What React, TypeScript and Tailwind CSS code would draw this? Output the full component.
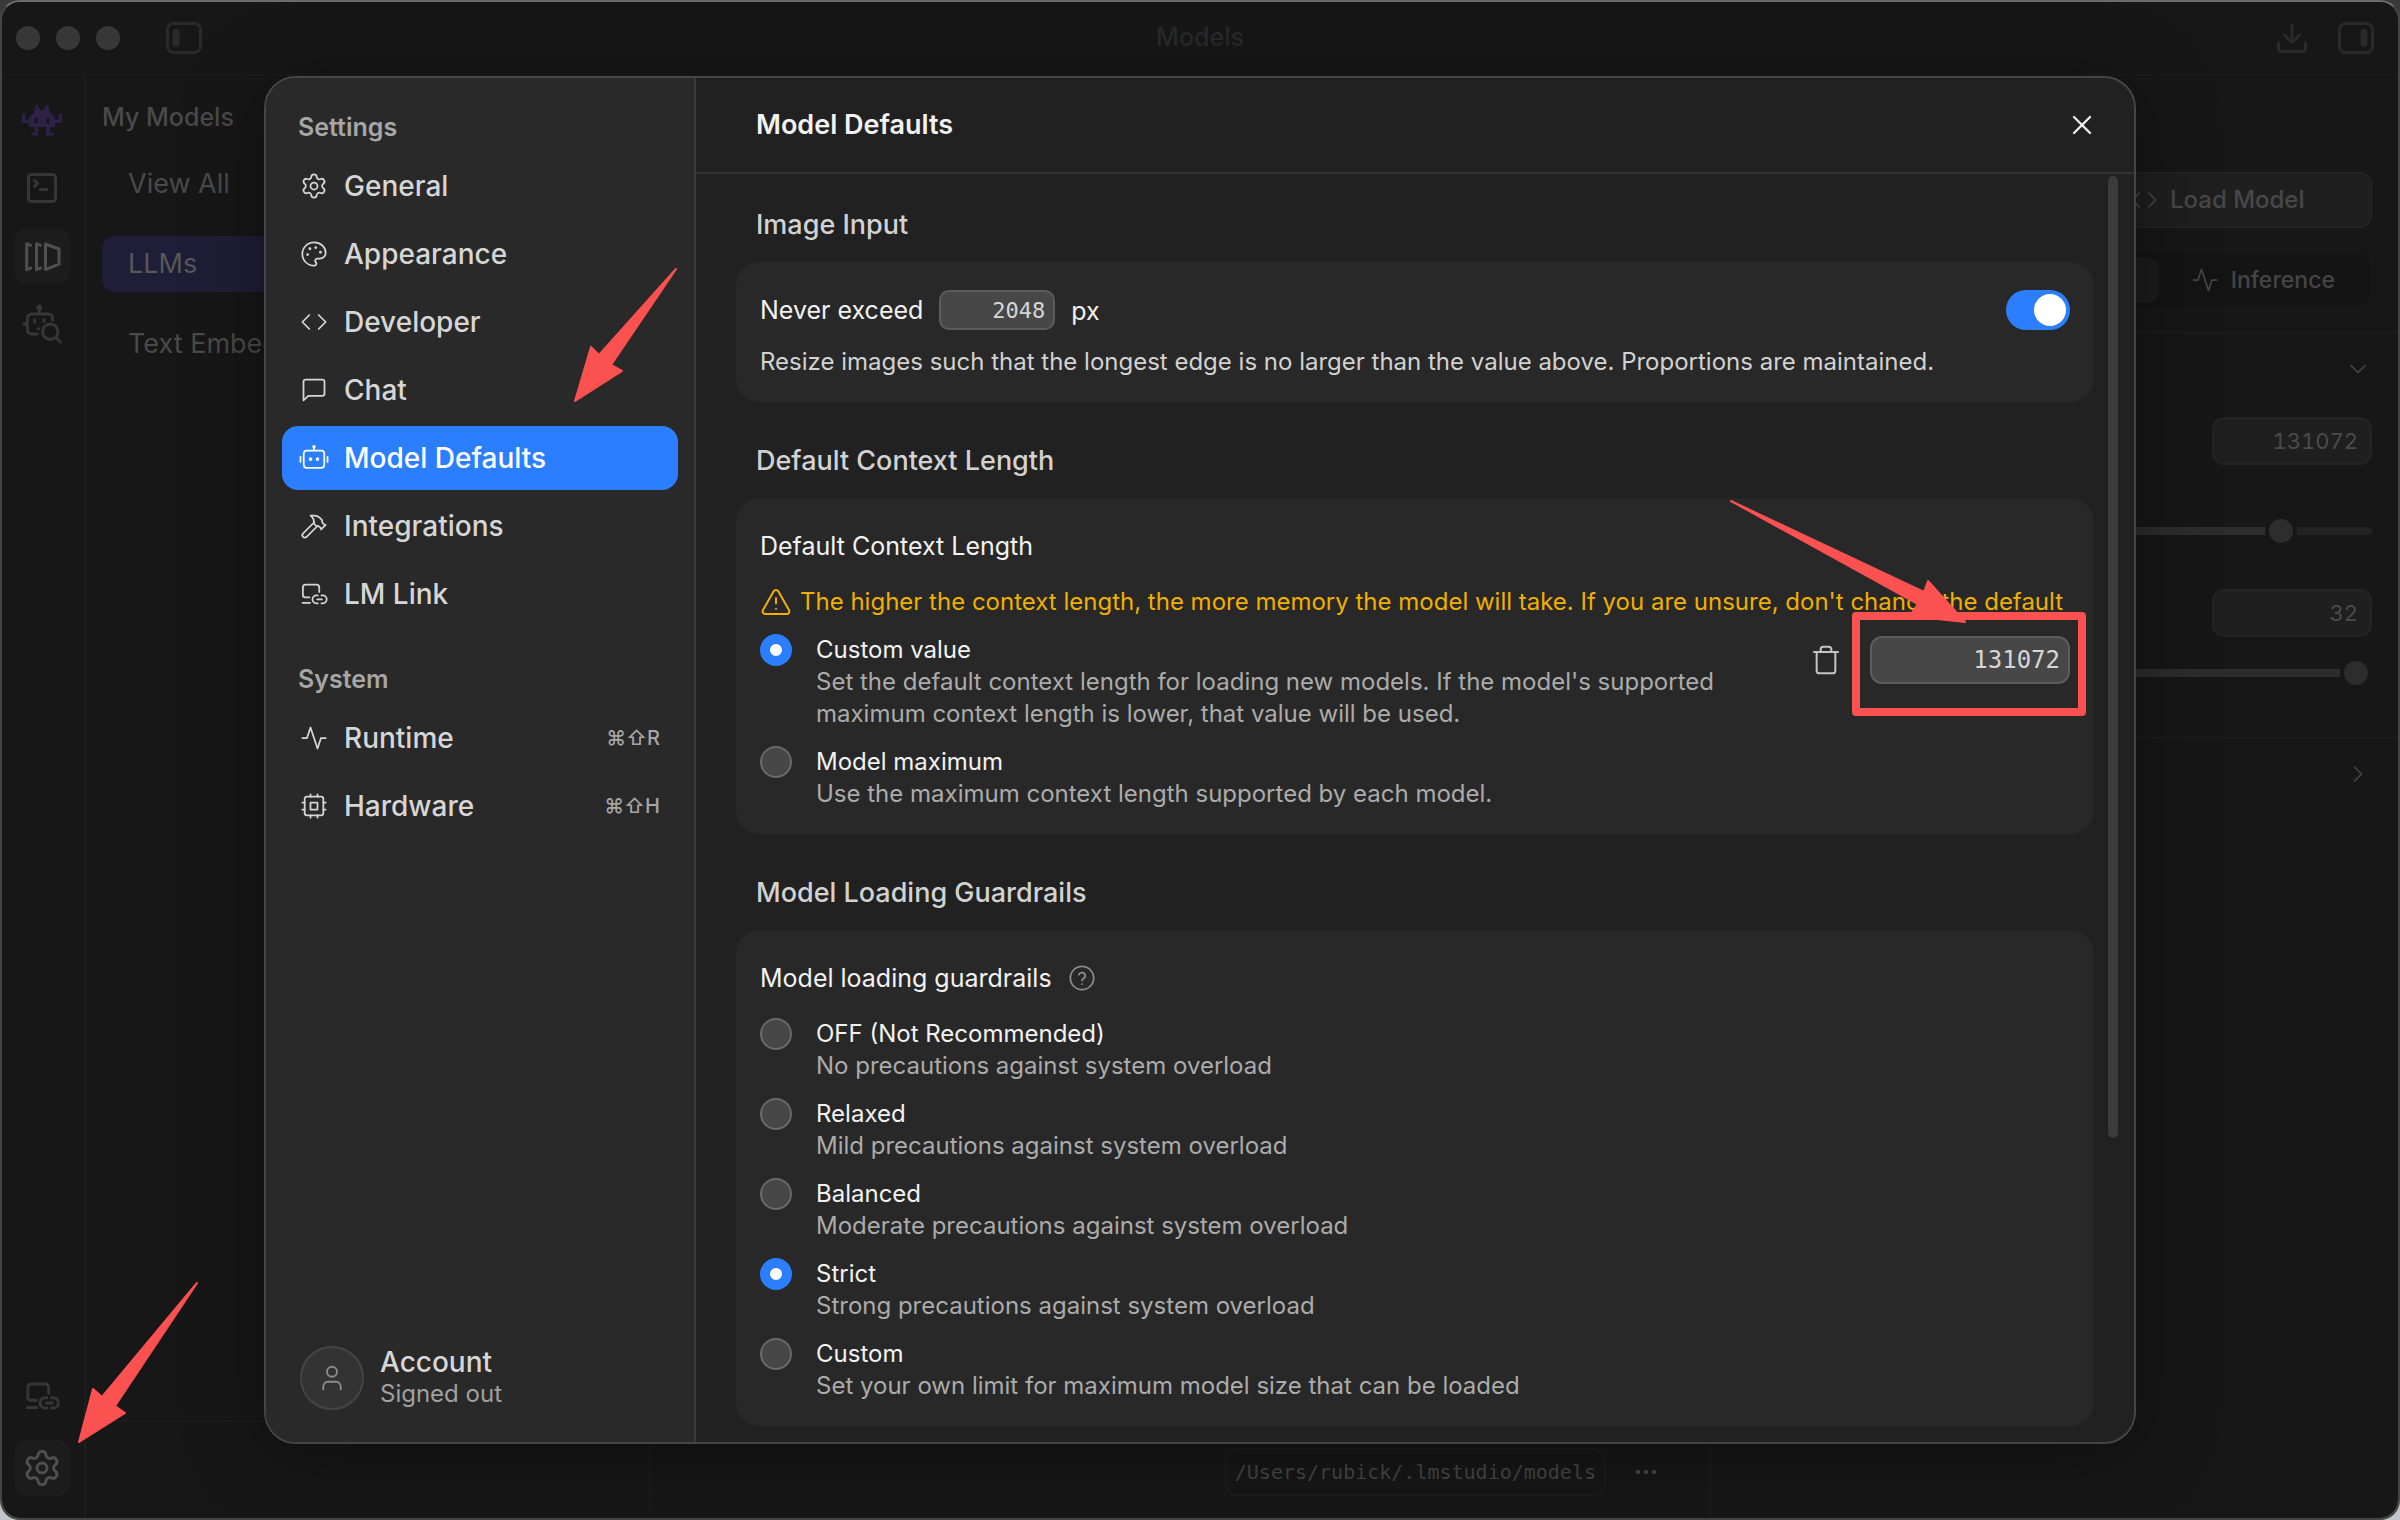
import { useState } from 'react';
import type { ReactNode } from 'react';
import {
  ChevronDown,
  ChevronRight,
  Code,
  Download,
  Ellipsis,
  Hammer,
  Palette,
  Settings,
  SquareTerminal,
  Trash,
  TriangleAlert,
  User,
  X,
} from 'lucide-react';

type IconProps = { className?: string; strokeWidth?: number };

const Svg = ({ className, strokeWidth = 1.5, children }: IconProps & { children: ReactNode }) => (
  <svg
    viewBox="0 0 24 24"
    fill="none"
    stroke="currentColor"
    strokeWidth={strokeWidth}
    strokeLinecap="round"
    strokeLinejoin="round"
    className={className}
    aria-hidden="true"
  >
    {children}
  </svg>
);

const ChatIcon = (props: IconProps) => (
  <Svg {...props}>
    <path d="M21 15a2 2 0 0 1-2 2H7l-4 4V5a2 2 0 0 1 2-2h14a2 2 0 0 1 2 2z" />
  </Svg>
);

const RobotIcon = ({ className }: IconProps) => (
  <Svg className={`overflow-visible ${className}`}>
    <rect x="3.2" y="5.6" width="17.6" height="14.8" rx="2.6" />
    <path d="M12 5.4V2.6" />
    <circle cx="12" cy="2.3" r="0.7" fill="currentColor" />
    <path d="M.4 11v4.4M23.6 11v4.4" />
    <circle cx="9" cy="13" r="0.8" fill="currentColor" />
    <circle cx="15" cy="13" r="0.8" fill="currentColor" />
  </Svg>
);

const LinkedDeviceIcon = (props: IconProps) => (
  <Svg {...props}>
    <path d="M16.5 10.2V6.4a2.4 2.4 0 0 0-2.4-2.4H4.9a2.4 2.4 0 0 0-2.4 2.4v6.4a2 2 0 0 0 2 2h3.6" />
    <path d="M2.2 19.6h6.4" />
    <path d="M15.2 20h-1.1a3.4 3.4 0 0 1 0-6.8h1.1M18.4 13.2h1.1a3.4 3.4 0 0 1 0 6.8h-1.1M14.8 16.6h4" />
  </Svg>
);

const ActivityIcon = (props: IconProps) => (
  <Svg {...props}>
    <path d="M22 12h-4l-3 9L9 3l-3 9H2" />
  </Svg>
);

const ChipIcon = (props: IconProps) => (
  <Svg {...props}>
    <rect x="4" y="4" width="16" height="16" rx="2" />
    <rect x="9" y="9" width="6" height="6" />
    <path d="M15 2v2M15 20v2M2 15h2M2 9h2M20 15h2M20 9h2M9 2v2M9 20v2" />
  </Svg>
);

const HelpIcon = (props: IconProps) => (
  <Svg {...props}>
    <circle cx="12" cy="12" r="10" />
    <path d="M9.2 9.2a2.9 2.9 0 0 1 5.6 1c0 1.9-2.8 2.4-2.8 3.9M12 17.2h.01" />
  </Svg>
);

const AlienLogo = () => (
  <svg viewBox="0 0 40 31" className="h-[31px] w-10 text-[#2d2148]" fill="currentColor" aria-hidden="true">
    <path
      fillRule="evenodd"
      d="M13.500 0H16v3h2v2h4V3h2V0h2.500v5H28v4h3v3h2v3h3.500V8.500H40V18h-7v4h-5v5.500h3.500V30.500H24V22h-8v8.500H9.500v-3H13V22H7v-4H0V8.500h3.500V15H7v-3h2V9h3V5h1.500zM12.700 13v5.500h3V13zM24.300 13v5.500h3V13z"
    />
  </svg>
);

const LibraryIcon = () => (
  <svg
    viewBox="0 0 56 56"
    className="size-14"
    fill="none"
    stroke="currentColor"
    strokeWidth="3"
    strokeLinecap="round"
    strokeLinejoin="round"
    aria-hidden="true"
  >
    <path d="M16.7 17.3 12.7 15.7v26l4-1.7M26.5 17.3l-4-1.6v26l4-1.7M31.5 16v25.5L45 36.2V21z" />
  </svg>
);

const RobotSearchIcon = () => (
  <svg
    viewBox="0 0 40 40"
    className="size-10"
    fill="none"
    stroke="currentColor"
    strokeWidth="3"
    strokeLinecap="round"
    aria-hidden="true"
  >
    <circle cx="17.3" cy="3.5" r="1.5" fill="currentColor" />
    <path d="M17.3 4v5.5M30.7 16v-1.5a4.5 4.5 0 0 0-4.5-4.5H9.8a4.5 4.5 0 0 0-4.5 4.5v11a4.5 4.5 0 0 0 4.5 4.5h5.5M2 20h3M12.7 15.8v2.4M22 15.8v1.6M16 24.7h.6" />
    <circle cx="28.3" cy="27.7" r="7.7" />
    <path d="m34 33.5 4.5 4.5" />
  </svg>
);

const PanelIcon = ({ side }: { side: 'left' | 'right' }) => (
  <svg viewBox="0 0 36 32" className="h-8 w-9" fill="none" stroke="currentColor" strokeWidth="3" aria-hidden="true">
    <rect x="1.5" y="1.5" width="33" height="29" rx="6" />
    <rect x={side === 'left' ? 6.5 : 22.5} y="7" width="7" height="18" rx="3.5" fill="currentColor" stroke="none" />
  </svg>
);

// Red callout arrow, placed by its parent
const Arrow = ({ points, className, viewBox }: { points: string; className: string; viewBox: string }) => (
  <svg viewBox={viewBox} className={`pointer-events-none absolute z-30 ${className}`} aria-hidden="true">
    <polygon points={points} fill="#fb5151" stroke="#fb5151" strokeWidth="2" strokeLinejoin="round" />
  </svg>
);

const settingsNav = [
  { label: 'General', icon: Settings },
  { label: 'Appearance', icon: Palette },
  { label: 'Developer', icon: Code },
  { label: 'Chat', icon: ChatIcon },
  { label: 'Model Defaults', icon: RobotIcon },
  { label: 'Integrations', icon: Hammer },
  { label: 'LM Link', icon: LinkedDeviceIcon },
];

const systemNav = [
  { label: 'Runtime', icon: ActivityIcon, keys: '⌘⇧R' },
  { label: 'Hardware', icon: ChipIcon, keys: '⌘⇧H' },
];

const guardrails = [
  { id: 'off', title: 'OFF (Not Recommended)', text: 'No precautions against system overload' },
  { id: 'relaxed', title: 'Relaxed', text: 'Mild precautions against system overload' },
  { id: 'balanced', title: 'Balanced', text: 'Moderate precautions against system overload' },
  { id: 'strict', title: 'Strict', text: 'Strong precautions against system overload' },
  { id: 'custom', title: 'Custom', text: 'Set your own limit for maximum model size that can be loaded' },
];

type RadioRowProps = {
  name: string;
  id: string;
  title: string;
  text: string;
  checked: boolean;
  onSelect: () => void;
};

const RadioRow = ({ name, id, title, text, checked, onSelect }: RadioRowProps) => (
  <label htmlFor={`${name}-${id}`} className="flex max-w-[960px] items-start gap-6">
    <input
      type="radio"
      id={`${name}-${id}`}
      name={name}
      checked={checked}
      onChange={onSelect}
      className="size-8 shrink-0 appearance-none rounded-full border-2 border-[#696969] bg-[#474747] checked:border-[10px] checked:border-[#2b7fff] checked:bg-white"
    />
    <span className="text-2xl leading-8">
      <span className="block text-[#f2f2f2]">{title}</span>
      <span className="block text-[#ababab]">{text}</span>
    </span>
  </label>
);

const Section = ({ title, children }: { title: string; children: ReactNode }) => (
  <section>
    <h3 className="mb-4 pl-5 text-[27px] leading-[42px] font-medium text-[#d2d2d2]">{title}</h3>
    <div className="rounded-3xl bg-[#282828] p-6">{children}</div>
  </section>
);

const sliderClass =
  'h-8 w-full appearance-none bg-transparent [&::-webkit-slider-runnable-track]:h-2 [&::-webkit-slider-runnable-track]:rounded-full [&::-webkit-slider-thumb]:-mt-3 [&::-webkit-slider-thumb]:size-8 [&::-webkit-slider-thumb]:appearance-none [&::-webkit-slider-thumb]:rounded-full [&::-webkit-slider-thumb]:border-4 [&::-webkit-slider-thumb]:border-[#171717] [&::-webkit-slider-thumb]:bg-[#2d2d2d]';

const dimInput =
  'h-12 w-40 rounded-xl border-2 border-[#242424] bg-[#1f1f1f] pr-3 text-right text-[22px] tabular-nums text-[#4b4b4b]';

const AppWindow = () => (
  <div className="flex h-full flex-col bg-[#171717]">
    <header className="grid h-[74px] shrink-0 grid-cols-[1fr_auto_1fr] items-center border-b-2 border-[#1b1b1b] px-[14px] text-[#2a2a2a]">
      <div className="flex items-center gap-4">
        <span className="size-6 rounded-full bg-[#373737]" />
        <span className="size-6 rounded-full bg-[#373737]" />
        <span className="size-6 rounded-full bg-[#373737]" />
        <button type="button" aria-label="Toggle sidebar" className="ml-[30px]">
          <PanelIcon side="left" />
        </button>
      </div>
      <h1 className="text-[25px] font-medium">Models</h1>
      <div className="flex items-center justify-end gap-7 pr-2.5">
        <button type="button" aria-label="Downloads">
          <Download className="size-9" strokeWidth={2} />
        </button>
        <button type="button" aria-label="Toggle right panel">
          <PanelIcon side="right" />
        </button>
      </div>
    </header>

    <div className="flex min-h-0 flex-1">
      <nav className="flex w-[84px] shrink-0 flex-col items-center border-r-2 border-[#1e1e1e] pt-4 pr-0.5 pb-[22px] text-[#363636]">
        <button type="button" aria-label="Chats" className="mb-3 flex size-14 items-center justify-center">
          <AlienLogo />
        </button>
        <button type="button" aria-label="Developer" className="mb-3 flex size-14 items-center justify-center">
          <SquareTerminal className="size-9" strokeWidth={2} />
        </button>
        <button type="button" aria-label="My Models" className="mb-3 flex size-14 items-center justify-center rounded-xl bg-[#1c1c1c] text-[#4f4f4f]">
          <LibraryIcon />
        </button>
        <button type="button" aria-label="Discover" className="flex size-14 items-center justify-center">
          <RobotSearchIcon />
        </button>
        <button type="button" aria-label="LM Link" className="mt-auto mb-4 flex size-14 items-center justify-center">
          <LinkedDeviceIcon className="size-9" strokeWidth={2} />
        </button>
        <div className="relative">
          <button type="button" aria-label="Settings" className="flex size-14 items-center justify-center rounded-xl bg-[#1c1c1c] text-[#4f4f4f]">
            <Settings className="size-10" strokeWidth={1.75} />
          </button>
          <Arrow
            viewBox="0 0 120 161"
            className="bottom-full left-full mb-[-3px] ml-2 h-[161px] w-[120px]"
            points="119,1 24,115 15,107 1,160 47,131 37,124"
          />
        </div>
      </nav>

      <div className="flex min-w-0 flex-1 flex-col">
        <div className="flex min-h-0 flex-1">
          <aside className="w-[566px] shrink-0 px-4 pt-5 text-[27px] text-[#4a4a4a]">
            <h2 className="text-[25px] leading-[42px] font-medium">My Models</h2>
            <ul className="mt-[18px] flex flex-col gap-6">
              <li><button type="button" className="flex h-14 w-full items-center rounded-xl pl-[26px]">View All</button></li>
              <li><button type="button" className="flex h-14 w-full items-center rounded-xl bg-[#1e1e38] pl-[26px] text-[#585858]">LLMs</button></li>
              <li><button type="button" className="flex h-14 w-full items-center rounded-xl pl-[26px]">Text Embedding</button></li>
            </ul>
          </aside>
        </div>
        <footer className="flex h-[98px] shrink-0 border-t-2 border-[#1b1b1b]">
          <div className="w-[565px] shrink-0 border-r-2 border-[#1b1b1b]" />
          <div className="flex flex-1 items-center justify-end gap-[26px] pt-1 pr-[49px] text-[#464646]">
            <code className="flex h-12 items-center rounded-xl border-2 border-[#1d1d1d] px-2 font-[DejaVu_Sans_Mono,monospace] text-xl">
              /Users/rubick/.lmstudio/models
            </code>
            <button type="button" aria-label="More">
              <Ellipsis className="size-7" strokeWidth={2} />
            </button>
          </div>
        </footer>
      </div>

      <aside className="flex w-[689px] shrink-0 flex-col border-l-2 border-[#1c1c1c] text-2xl text-[#454545]">
        <div className="flex flex-col gap-6 border-b border-[#1f1f1f] px-[26px] pt-24 pb-6">
          <div className="flex gap-4">
            <button type="button" aria-label="Eject" className="h-14 flex-1 rounded-xl border border-[#272727] bg-[#1f1f1f]" />
            <button type="button" className="flex h-14 flex-1 items-center justify-center gap-3 rounded-xl border border-[#272727] bg-[#1f1f1f] font-medium text-[#484848]">
              <Code className="size-7" strokeWidth={1.5} />
              Load Model
            </button>
          </div>
          <div className="flex h-14 rounded-2xl border border-[#191919] bg-[#141414] p-1 text-[23px] font-medium">
            <button type="button" aria-label="Info" className="flex-1" />
            <button type="button" aria-label="Load" className="flex-1 rounded-xl bg-[#1c1c1c]" />
            <button type="button" className="flex flex-1 items-center justify-center gap-3">
              <ActivityIcon className="size-7" />
              Inference
            </button>
          </div>
        </div>
        <div className="flex flex-col items-end border-b border-[#1f1f1f] px-[26px] pt-[22px] pb-12">
          <ChevronDown className="size-7" strokeWidth={1.5} />
          <input type="text" aria-label="Context Length" defaultValue="131072" className={`mt-[34px] ${dimInput}`} />
          <input
            type="range"
            aria-label="Context Length slider"
            max={200}
            defaultValue={175}
            className={`mt-[50px] mb-[42px] ${sliderClass} [&::-webkit-slider-runnable-track]:bg-[linear-gradient(90deg,#2d2d2d_85%,#222222_85%)]`}
          />
          <input type="text" aria-label="GPU Offload" defaultValue="32" className={dimInput} />
          <input
            type="range"
            aria-label="GPU Offload slider"
            defaultValue={100}
            className={`mt-5 ${sliderClass} [&::-webkit-slider-runnable-track]:bg-[linear-gradient(90deg,#2d2d2d_95%,#171717_95%)]`}
          />
        </div>
        <div className="flex justify-end px-[26px] pt-[22px]">
          <ChevronRight className="size-7" strokeWidth={1.5} />
        </div>
      </aside>
    </div>
  </div>
);

const App = () => {
  const [page, setPage] = useState('Model Defaults');
  const [resize, setResize] = useState(true);
  const [context, setContext] = useState('value');
  const [guardrail, setGuardrail] = useState('strict');

  return (
    <div className="relative h-screen overflow-hidden bg-linear-to-b from-[#3a3a3a] to-[#c4c4cc] font-[Inter,sans-serif]">
      <div className="h-full overflow-hidden rounded-[20px] border-2 border-[#454545] border-t-[#6c6c6c]">
        <AppWindow />
      </div>

      <div className="pointer-events-none absolute inset-0 z-20 flex items-center justify-center">
        <div
          role="dialog"
          aria-label="Settings"
          className="pointer-events-auto flex h-[90%] w-[78%] overflow-hidden rounded-[32px] border-2 border-[#454545] bg-[#212121] shadow-[0_8px_80px_rgba(0,0,0,0.4)]"
        >
          <nav className="flex w-[430px] shrink-0 flex-col border-r-2 border-[#3a3a3a] bg-[#292929] px-4 pt-7 pb-8">
            <h2 className="pl-4 text-[25px] leading-[42px] font-semibold text-[#a6a6a6]">Settings</h2>
            <ul className="mt-1.5 flex flex-col gap-1">
              {settingsNav.map(({ label, icon: Icon }) => (
                <li key={label} className="relative">
                  <button
                    type="button"
                    onClick={() => setPage(label)}
                    className={
                      label === page
                        ? 'flex h-16 w-full items-center gap-4 rounded-2xl bg-[#2b7fff] px-[18px] text-[28px] font-medium text-white'
                        : 'flex h-16 w-full items-center gap-4 rounded-2xl px-[18px] text-[28px] font-medium text-[#d6d6d6]'
                    }
                  >
                    <Icon className="size-7" strokeWidth={1.5} />
                    {label}
                  </button>
                  {label === 'Model Defaults' && (
                    <Arrow
                      viewBox="0 0 104 134"
                      className="right-0 bottom-[88px] h-[134px] w-[104px]"
                      points="102,1 25,87 17,79 1,133 48,103 37,97"
                    />
                  )}
                </li>
              ))}
            </ul>
            <h2 className="mt-8 pl-4 text-[25px] leading-[42px] font-semibold text-[#a6a6a6]">System</h2>
            <ul className="mt-1.5 flex flex-col gap-1">
              {systemNav.map(({ label, icon: Icon, keys }) => (
                <li key={label}>
                  <button
                    type="button"
                    onClick={() => setPage(label)}
                    className="flex h-16 w-full items-center gap-4 rounded-2xl px-[18px] text-[28px] font-medium text-[#d6d6d6]"
                  >
                    <Icon className="size-7" strokeWidth={1.5} />
                    {label}
                    <kbd className="ml-auto font-[Inter,sans-serif] text-xl text-[#a6a6a6]">{keys}</kbd>
                  </button>
                </li>
              ))}
            </ul>
            <button type="button" className="mt-auto flex items-center gap-4 pl-[18px] text-left">
              <span className="flex size-16 items-center justify-center rounded-full border-2 border-[#454545] bg-[#333333] text-[#8c8c8c]">
                <User className="size-[30px]" strokeWidth={1.5} />
              </span>
              <span className="leading-8">
                <span className="block text-[28px] font-medium text-[#d6d6d6]">Account</span>
                <span className="block text-2xl text-[#a0a0a0]">Signed out</span>
              </span>
            </button>
          </nav>

          <div className="flex min-w-0 flex-1 flex-col">
            <header className="flex h-24 shrink-0 items-center justify-between border-b-2 border-[#333333] pr-9 pl-[60px]">
              <h2 className="text-[27px] font-semibold text-[#f2f2f2]">Model Defaults</h2>
              <button type="button" aria-label="Close" className="text-[#f2f2f2]">
                <X className="size-8" strokeWidth={1.75} />
              </button>
            </header>

            <div className="flex min-h-0 flex-1 pr-4">
              <div className="flex min-w-0 flex-1 flex-col gap-[38px] overflow-hidden pt-[30px] pr-[14px] pl-10">
                <Section title="Image Input">
                  <div className="flex items-center">
                    <label htmlFor="max-px" className="pt-0.5 text-[25px] text-[#f2f2f2]">Never exceed</label>
                    <input
                      id="max-px"
                      type="text"
                      defaultValue="2048"
                      className="ml-4 h-10 w-[116px] rounded-[10px] border-2 border-[#5c5c5c] bg-[#474747] pr-2 text-right font-[DejaVu_Sans_Mono,monospace] text-[22px] text-[#d6d6d6]"
                    />
                    <span className="ml-4 pt-0.5 text-[25px] leading-[46px] text-[#f2f2f2]">px</span>
                    <input
                      type="checkbox"
                      aria-label="Limit image size"
                      checked={resize}
                      onChange={(e) => setResize(e.target.checked)}
                      className="ml-auto h-10 w-16 appearance-none rounded-full bg-[#474747] p-1 before:block before:size-8 before:rounded-full before:bg-white checked:bg-[#2b7fff] checked:before:ml-auto"
                    />
                  </div>
                  <p className="mt-3 text-2xl leading-8 text-[#d2d2d2]">
                    Resize images such that the longest edge is no larger than the value above. Proportions are maintained.
                  </p>
                </Section>

                <Section title="Default Context Length">
                  <h4 className="text-[25px] leading-[48px] text-[#f2f2f2]">Default Context Length</h4>
                  <p className="mt-4 flex items-center gap-2 text-2xl leading-8 whitespace-nowrap text-[#f0b000]">
                    <TriangleAlert className="size-8 shrink-0" strokeWidth={1.5} />
                    The higher the context length, the more memory the model will take. If you are unsure, don't change the default
                  </p>
                  <div className="mt-4 flex flex-col gap-4">
                    <div className="flex items-start justify-between">
                      <RadioRow
                        name="context"
                        id="value"
                        title="Custom value"
                        text="Set the default context length for loading new models. If the model's supported maximum context length is lower, that value will be used."
                        checked={context === 'value'}
                        onSelect={() => setContext('value')}
                      />
                      <div className="mt-0.5 flex items-center gap-7">
                        <button type="button" aria-label="Reset" className="text-[#c4c4c4]">
                          <Trash className="size-8" strokeWidth={1.5} />
                        </button>
                        <div className="relative">
                          <input
                            type="text"
                            aria-label="Custom context length"
                            defaultValue="131072"
                            className="block h-12 w-[200px] rounded-xl border-2 border-[#5c5c5c] bg-[#474747] pr-2 text-right font-[DejaVu_Sans_Mono,monospace] text-2xl text-[#d6d6d6]"
                          />
                          <span className="pointer-events-none absolute -top-6 -right-4 -bottom-8 -left-[18px] rounded border-8 border-[#fb5151]" />
                          <Arrow
                            viewBox="0 0 236 124"
                            className="right-[104px] bottom-[60px] h-[124px] w-[236px]"
                            points="1,1 194,92 198,81 235,122 180,116 188,104"
                          />
                        </div>
                      </div>
                    </div>
                    <RadioRow
                      name="context"
                      id="max"
                      title="Model maximum"
                      text="Use the maximum context length supported by each model."
                      checked={context === 'max'}
                      onSelect={() => setContext('max')}
                    />
                  </div>
                </Section>

                <Section title="Model Loading Guardrails">
                  <div className="flex items-center gap-4">
                    <h4 className="text-[25px] leading-[48px] text-[#f2f2f2]">Model loading guardrails</h4>
                    <HelpIcon className="size-7 text-[#8c8c8c]" />
                  </div>
                  <div className="mt-4 flex flex-col gap-4">
                    {guardrails.map((g) => (
                      <RadioRow
                        key={g.id}
                        name="guardrail"
                        id={g.id}
                        title={g.title}
                        text={g.text}
                        checked={guardrail === g.id}
                        onSelect={() => setGuardrail(g.id)}
                      />
                    ))}
                  </div>
                </Section>
              </div>
              <div className="w-2.5 shrink-0 pt-0.5">
                <div className="h-[76%] rounded-full bg-[#3b3b3b]" />
              </div>
            </div>
          </div>
        </div>
      </div>
    </div>
  );
};

export default App;
